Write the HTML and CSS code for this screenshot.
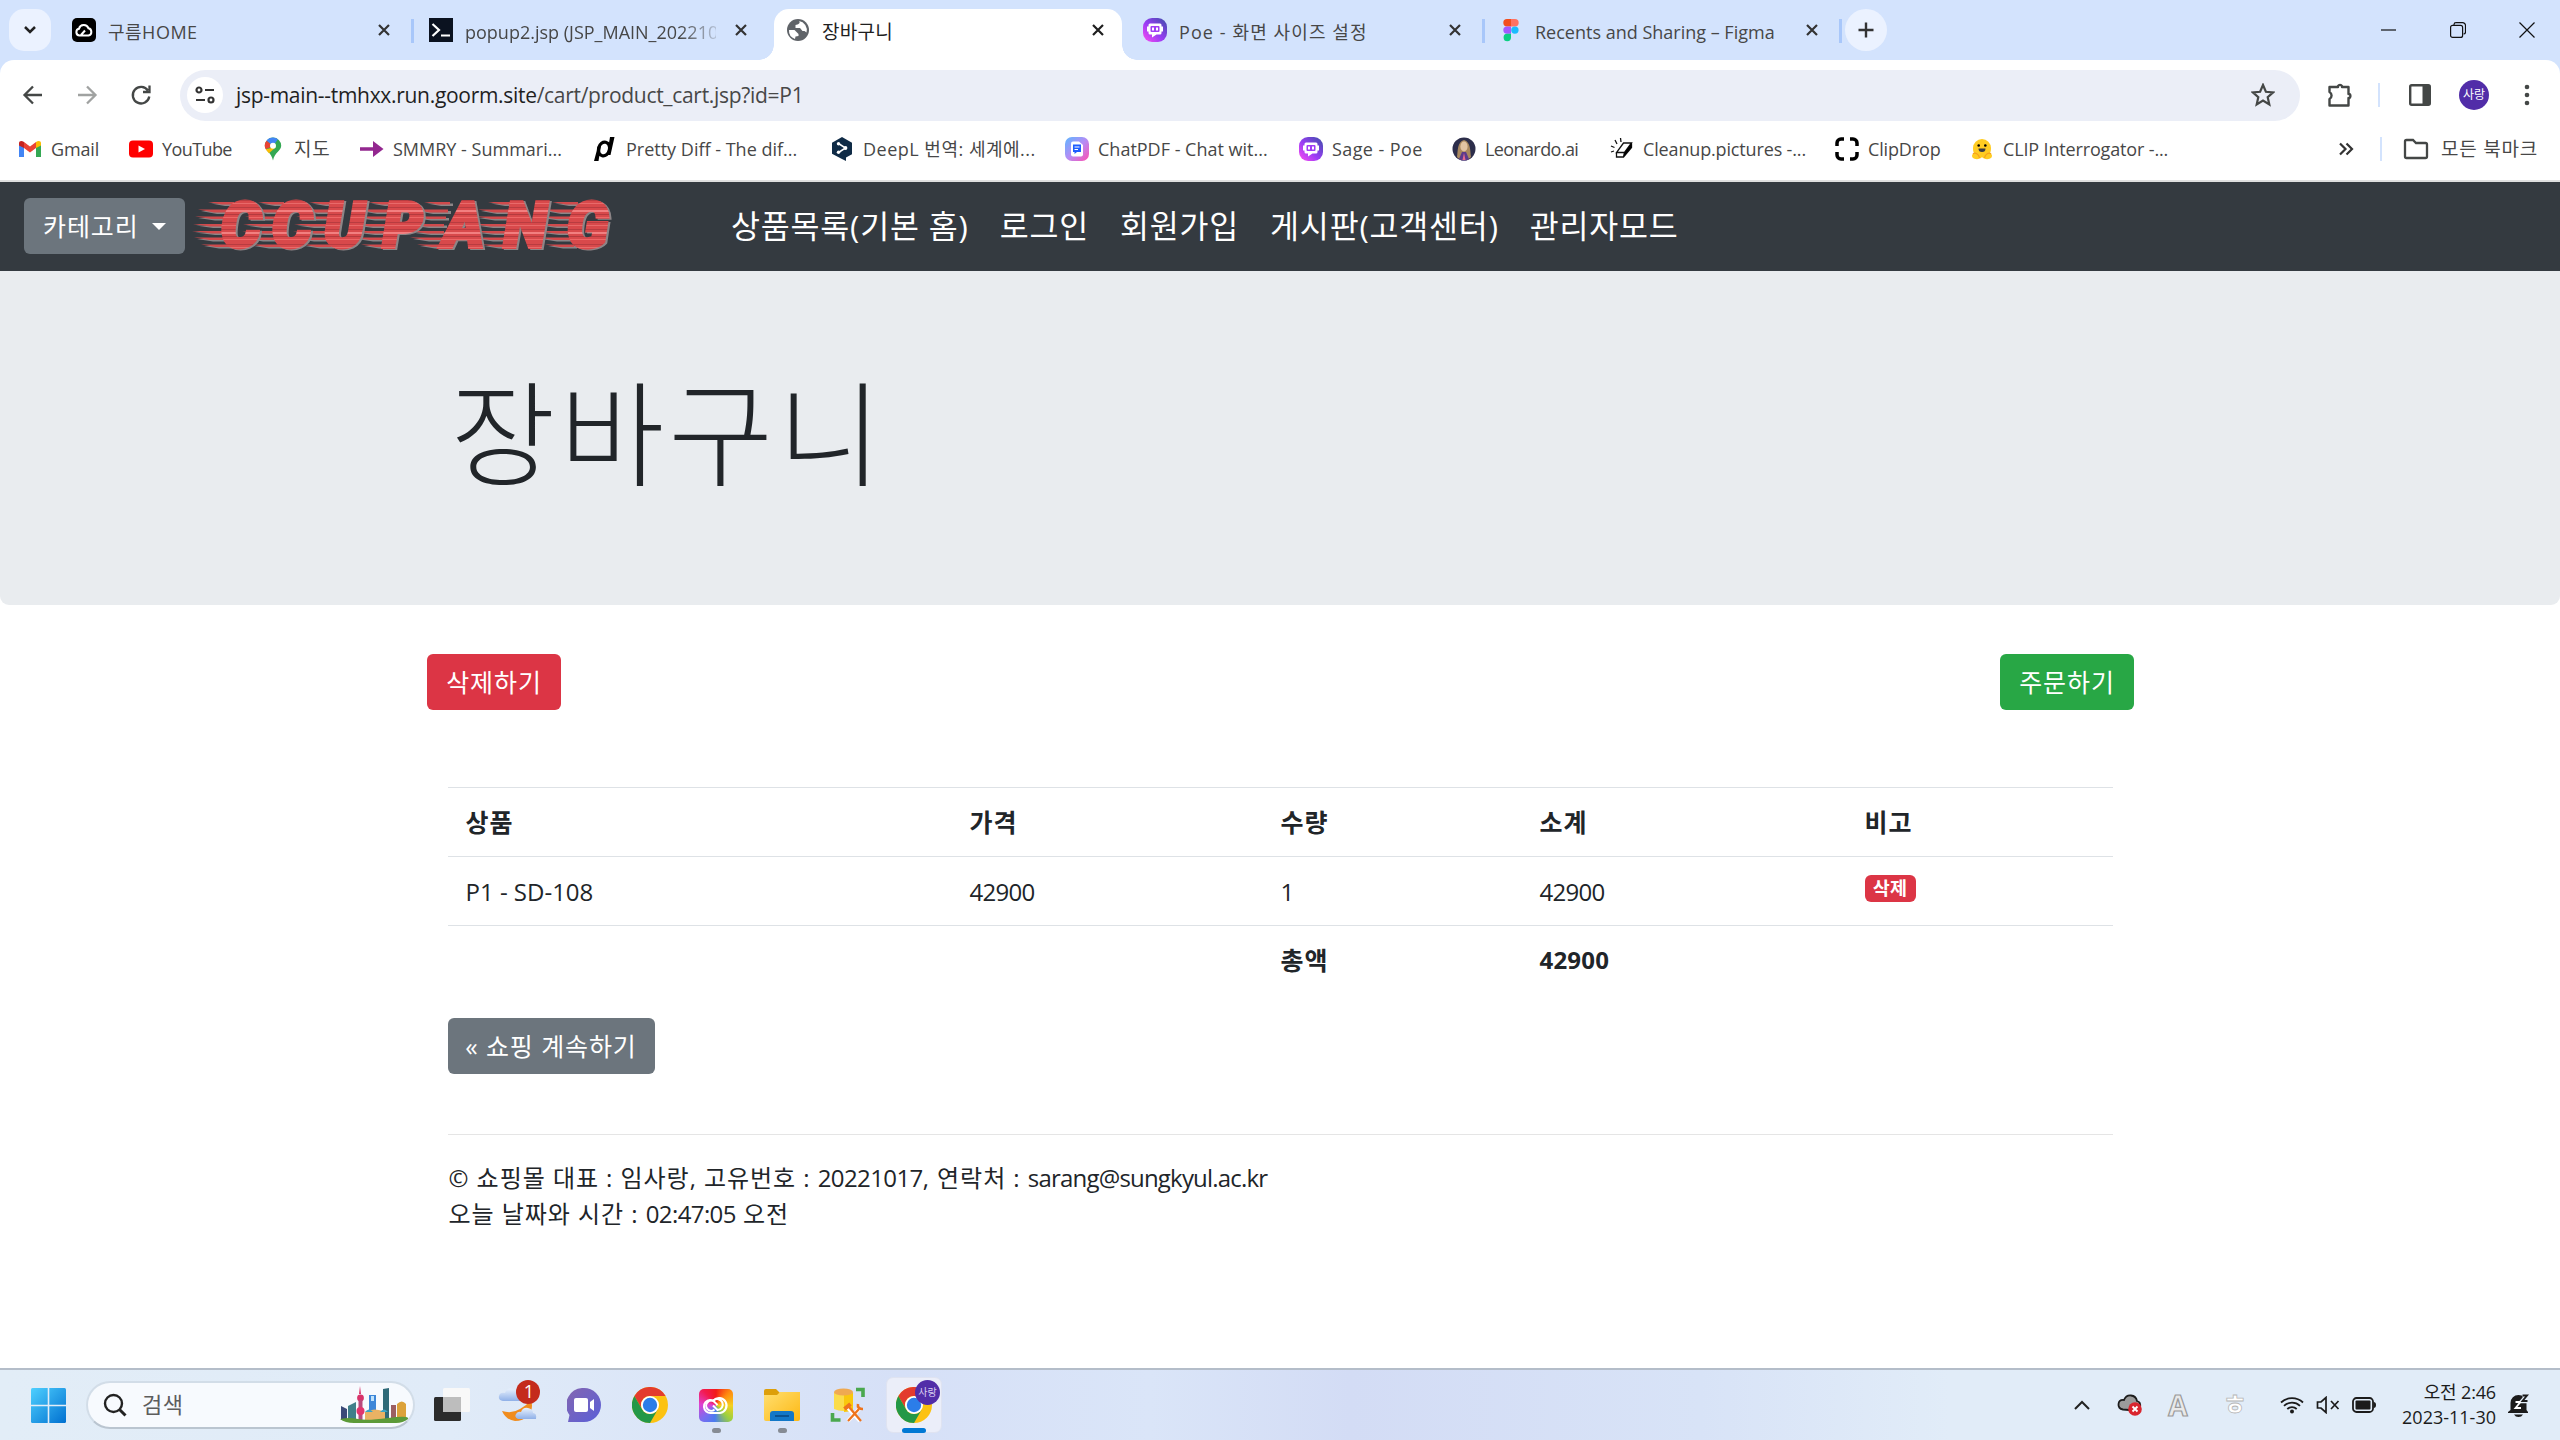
FILE: index.html
```html
<!DOCTYPE html>
<html lang="ko">
<head>
<meta charset="utf-8">
<title>장바구니</title>
<link rel="stylesheet" href="styles.css">
</head>
<body>
<svg class="defs" width="0" height="0" aria-hidden="true">
  <defs>
    <linearGradient id="poe" x1="0" y1="1" x2="1" y2="0"><stop offset="0" stop-color="#ff4df0"/><stop offset=".45" stop-color="#9a3df5"/><stop offset="1" stop-color="#3d4fa8"/></linearGradient>
    <linearGradient id="pdf" x1="0" y1="0" x2="1" y2="1"><stop offset="0" stop-color="#5db6ff"/><stop offset=".5" stop-color="#b58cf5"/><stop offset="1" stop-color="#ff4fb0"/></linearGradient>
    <linearGradient id="win" x1="0" y1="0" x2="1" y2="1"><stop offset="0" stop-color="#4fd0ff"/><stop offset="1" stop-color="#0070d0"/></linearGradient>
    <linearGradient id="chat" x1="0" y1="0" x2="1" y2="1"><stop offset="0" stop-color="#8466b0"/><stop offset="1" stop-color="#5a5fd8"/></linearGradient>
    <linearGradient id="fold" x1="0" y1="0" x2="1" y2="1"><stop offset="0" stop-color="#ffdf70"/><stop offset="1" stop-color="#fdb813"/></linearGradient>
    <linearGradient id="cloud" x1="0" y1="0" x2="0" y2="1"><stop offset="0" stop-color="#e8f1fd"/><stop offset="1" stop-color="#8fb0e8"/></linearGradient>
    <pattern id="scan" width="60" height="22" patternUnits="userSpaceOnUse">
      <rect width="60" height="22" fill="#d8494b"/>
      <rect y="2" width="60" height="1" fill="#b83c40"/><rect y="5" width="60" height="1" fill="#e86a6a"/>
      <rect y="9" width="60" height="1" fill="#b83c40"/><rect y="12" width="60" height="2" fill="#f27f80"/>
      <rect y="16" width="60" height="1" fill="#b53a3e"/><rect y="19" width="60" height="1" fill="#e66"/>
    </pattern>
    <path id="streaks" d="M16 4H42V6.500H30ZM6 11.500H40V14.500H22ZM3 18.500H38V21H20ZM1 26H36V28.500H18ZM0 33H36V35.500H20ZM2 39.500H38V42H18ZM9 46.500H38V49H24Z"/>
    <symbol id="i-x" viewBox="0 0 14 14"><path d="M2 2l10 10M12 2L2 12" fill="none" stroke="currentColor" stroke-width="2.200"/></symbol>
    <symbol id="i-poe" viewBox="0 0 24 24"><rect width="24" height="24" rx="9" fill="url(#poe)"/><path d="M7 5.500h10a1.500 1.500 0 0 1 1.500 1.500v1.500H20v5h-1.500V15a1.500 1.500 0 0 1-1.500 1.500h-3.500L9 19.500v-3H7A1.500 1.500 0 0 1 5.500 15v-1.500H4v-5h1.500V7A1.500 1.500 0 0 1 7 5.500z" fill="#fff"/><rect x="7.500" y="8" width="9" height="6" rx="1" fill="#a03df5"/><path d="M10 9.500v3M14 9.500v3" stroke="#fff" stroke-width="2"/></symbol>
    <symbol id="i-chrome" viewBox="0 0 36 36"><circle cx="18" cy="18" r="18" fill="#fcc211"/><path d="M2.400 9A18 18 0 0 1 33.600 9H18a9 9 0 0 0-7.800 13.500z" fill="#e33b2e"/><path d="M2.400 9A18 18 0 0 0 18 36l7.800-13.500A9 9 0 0 1 10.200 22.500z" fill="#239847"/><circle cx="18" cy="18" r="9" fill="#fff"/><circle cx="18" cy="18" r="7.200" fill="#2b7de9"/></symbol>
  </defs>
</svg>

<header class="browser">
  <div class="tabstrip">
    <button class="tab-search"><svg width="14" height="10" viewBox="0 0 14 10"><path d="M2 2l5 5 5-5" fill="none" stroke="#222" stroke-width="2.500"/></svg></button>
    <div class="tab tab-goorm">
      <svg class="fav" viewBox="0 0 24 24"><rect width="24" height="24" rx="5"/><path d="M7.500 17.500a3.400 3.400 0 0 1-.5-6.700 5 5 0 0 1 9.500-.5A3.700 3.700 0 0 1 16.500 17.500zM9 17l4-4.500" fill="none" stroke="#fff" stroke-width="2"/></svg>
      <span class="tab-title ls-half">구름HOME</span><svg class="x"><use href="#i-x"/></svg>
    </div>
    <div class="tab tab-popup">
      <svg class="fav" viewBox="0 0 24 24"><rect width="24" height="24" fill="#0b1220"/><path d="M3.500 6l6.500 6-6.500 6M12 17.500h9" fill="none" stroke="#fff" stroke-width="2.200"/></svg>
      <span class="tab-title fade">popup2.jsp (JSP_MAIN_202210</span><svg class="x"><use href="#i-x"/></svg>
    </div>
    <div class="tab active">
      <svg class="fav" viewBox="0 0 24 24"><circle cx="12" cy="12" r="11" fill="#5f6368"/><path d="M3 12h5.500l4 4v2l-3 .5-.5 2.500A9 9 0 0 1 3 12zM13 3c1.500 1.500 0 3-1.500 3.500l-2 .5v3h4.500l2.500 3h2l2 1.500A9.300 9.300 0 0 0 13 3z" fill="#fff"/></svg>
      <span class="tab-title ko-title">장바구니</span><svg class="x"><use href="#i-x"/></svg>
    </div>
    <div class="tab tab-poe">
      <svg class="fav"><use href="#i-poe"/></svg>
      <span class="tab-title ls-wide">Poe - 화면 사이즈 설정</span><svg class="x"><use href="#i-x"/></svg>
    </div>
    <div class="tab tab-figma">
      <svg class="fav" viewBox="0 0 24 24"><path d="M12 1H8a3.700 3.700 0 0 0 0 7.400h4z" fill="#f24e1e"/><path d="M12 1h4a3.700 3.700 0 0 1 0 7.400h-4z" fill="#ff7262"/><path d="M12 8.400H8a3.700 3.700 0 0 0 0 7.400h4z" fill="#a259ff"/><circle cx="15.900" cy="12.100" r="3.700" fill="#1abcfe"/><path d="M12 15.800H8a3.700 3.700 0 1 0 4 3.700z" fill="#0acf83"/></svg>
      <span class="tab-title">Recents and Sharing – Figma</span><svg class="x"><use href="#i-x"/></svg>
    </div>
    <button class="new-tab"><svg width="16" height="16" viewBox="0 0 16 16"><path d="M8 .5v15M.5 8h15" stroke="#333" stroke-width="2.400"/></svg></button>
    <div class="window-controls">
      <svg width="16" height="16" viewBox="0 0 16 16"><path d="M1 8h15" stroke="#111" stroke-width="1.200"/></svg>
      <svg width="16" height="16" viewBox="0 0 16 16"><path d="M4 3V2.500A2 2 0 0 1 6 .6h6.500a3 3 0 0 1 3 3V10a2 2 0 0 1-2 2" fill="none" stroke="#111" stroke-width="1.200"/><rect x=".6" y="3.400" width="12" height="12" rx="2" fill="none" stroke="#111" stroke-width="1.200"/></svg>
      <svg width="16" height="16" viewBox="0 0 16 16"><path d="M.5.5l15 15M15.500.5l-15 15" stroke="#111" stroke-width="1.200"/></svg>
    </div>
  </div>

  <div class="toolbar">
    <svg class="nav-icon" viewBox="0 0 24 24"><path d="M21 12H4M12 3.500L3.500 12l8.500 8.500" fill="none" stroke="#444746" stroke-width="2.300"/></svg>
    <svg class="nav-icon dim" viewBox="0 0 24 24"><path d="M3 12h17M12 3.500l8.500 8.500-8.500 8.500" fill="none" stroke="#444746" stroke-width="2.300"/></svg>
    <svg class="nav-icon" viewBox="0 0 24 24"><path d="M19 7.500A8.300 8.300 0 1 0 20.300 13.500M20.500 2.500v6.500H14" fill="none" stroke="#444746" stroke-width="2.300"/></svg>
    <div class="omnibox">
      <span class="site-info"><svg width="20" height="18" viewBox="0 0 20 18"><g fill="none" stroke="#333" stroke-width="2.200"><circle cx="4" cy="4" r="2.500"/><path d="M10 4h9M1 14h9"/><circle cx="16" cy="14" r="2.500"/></g></svg></span>
      <span class="url"><b>jsp-main--tmhxx.run.goorm.site</b>/cart/product_cart.jsp?id=P1</span>
      <svg class="star" viewBox="0 0 24 24"><path d="M12 2l2.900 6.800 7.300.6-5.500 4.800 1.600 7.200-6.300-3.800-6.300 3.800 1.600-7.200L1.800 9.400l7.300-.6z" fill="none" stroke="#444746" stroke-width="2.200"/></svg>
    </div>
    <svg class="ext" viewBox="0 0 27 27"><path d="M2.500 5h8.500V4a2.300 2.300 0 0 1 4 0v1h6.500v7h1a2.600 2.600 0 0 1 0 4h-1v7.500h-19v-6.500a4 4 0 0 0 0-7z" fill="none" stroke="#444746" stroke-width="2.400" stroke-linejoin="round"/></svg>
    <i class="sep"></i>
    <svg class="side" viewBox="0 0 22 22"><rect x="1.200" y="1.200" width="19.600" height="19.600" rx="1.500" fill="none" stroke="#444746" stroke-width="2.400"/><path d="M13.500 1H21v20h-7.500z" fill="#444746"/></svg>
    <span class="avatar">사랑</span>
    <svg class="dots" viewBox="0 0 6 22"><g fill="#444746"><circle cx="3" cy="3" r="2.300"/><circle cx="3" cy="11" r="2.300"/><circle cx="3" cy="19" r="2.300"/></g></svg>
  </div>

  <nav class="bookmarks">
    <a class="bm"><svg viewBox="0 0 24 24"><path d="M1 20V6l5 4v10z" fill="#4285f4"/><path d="M23 20V6l-5 4v10z" fill="#34a853"/><path d="M6 11V5l6 4.500L18 5v6l-6 4.500z" fill="#ea4335"/><path d="M1 8.500V6c0-2 2.500-3 5-1v6z" fill="#c5221f"/><path d="M23 8.500V6c0-2-2.500-3-5-1v6z" fill="#fbbc04"/></svg><span class="ls-bit">Gmail</span></a>
    <a class="bm"><svg viewBox="0 0 24 24"><rect y="3.500" width="24" height="17" rx="4" fill="red"/><path d="M9.500 8.500v7l6.500-3.500z" fill="#fff"/></svg><span class="ls-tight">YouTube</span></a>
    <a class="bm"><svg viewBox="0 0 24 24"><path d="M12 .5A8.200 8.200 0 0 0 3.800 8.700C3.800 14 10.500 15 12 23.500 13.500 15 20.200 14 20.200 8.700A8.200 8.200 0 0 0 12 .5z" fill="#34a853"/><path d="M12 .5a8.200 8.200 0 0 0-6.500 3.200L12 9l5-6.800A8.200 8.200 0 0 0 12 .5z" fill="#4285f4"/><path d="M5.500 3.700a8.200 8.200 0 0 0-.8 8.600L12 9z" fill="#ea4335"/><path d="M4.700 12.300c.8 1.400 2 2.700 3.300 4L15 10z" fill="#fbbc04"/><circle cx="12" cy="8.700" r="3" fill="#fff"/></svg><span class="ko-label">지도</span></a>
    <a class="bm"><svg viewBox="0 0 24 24"><path d="M0 10.200h13V4l10.500 8L13 20v-6.200H0z" fill="#93278f"/></svg><span>SMMRY - Summari...</span></a>
    <a class="bm"><svg viewBox="0 0 24 24"><ellipse cx="11" cy="12" rx="5.500" ry="7" transform="rotate(15 11 12)" fill="none" stroke="#000" stroke-width="3.200"/><path d="M17 0h4.500l-4 18H14zM5 9l3 0L5.500 24H1z"/></svg><span>Pretty Diff - The dif...</span></a>
    <a class="bm"><svg viewBox="0 0 24 24"><path d="M12 0l10 5.700v11.500L16 20.500V24l-5-2.500-9-4.800V5.700z" fill="#0f2b46"/><path d="M8.500 6.500l7 4.500-7 4.500" fill="none" stroke="#fff" stroke-width="1.500"/><circle cx="8.500" cy="6.700" r="1.700" fill="#fff"/><circle cx="15.500" cy="11" r="1.900" fill="#fff"/><circle cx="8.500" cy="15.300" r="1.700" fill="#fff"/></svg><span class="ls-half">DeepL 번역: 세계에...</span></a>
    <a class="bm"><svg viewBox="0 0 24 24"><rect width="24" height="24" rx="7" fill="url(#pdf)"/><path d="M8 4.500h6l4 3.500v9.500a2 2 0 0 1-2 2H8a2 2 0 0 1-2-2v-11a2 2 0 0 1 2-2z" fill="#fff"/><path d="M8 7.500h8V15h-4l-2.500 2V15H8z" fill="#1f5dff"/><path d="M9.500 10h5M9.500 12.500h3.500" stroke="#fff"/></svg><span>ChatPDF - Chat wit...</span></a>
    <a class="bm"><svg><use href="#i-poe"/></svg><span class="ls-some">Sage - Poe</span></a>
    <a class="bm"><svg viewBox="0 0 24 24"><circle cx="12" cy="12" r="11.500" fill="#2c2d4a"/><path d="M5 20c1-6 0-15 7-17 7 2 6 11 7 17-3 4-11 4-14 0z" fill="#a9885f"/><ellipse cx="12" cy="9.500" rx="3.600" ry="5" fill="#e2c3a2"/><path d="M7 22l3-7h4l3 7c-3 2-7 2-10 0z" fill="#5b3a8c"/><path d="M10.500 23l1.500-7 1.500 7z" fill="#e56b8c"/></svg><span class="ls-tight">Leonardo.ai</span></a>
    <a class="bm"><svg viewBox="0 0 24 24"><g fill="none" stroke="#111" stroke-width="1.300"><path d="M13.500 6h8l-7 9.500H6.500zM6.500 15.500V20h7l8-9.500V6M14.500 15.500L13.500 20M1 9l3.500 1.500M1 15l3-1M5 3l2 4M10.500 1l.5 4"/></g><path d="M14.500 15.500L21.500 6v4.500l-8 9.500z"/></svg><span class="ls-bit">Cleanup.pictures -...</span></a>
    <a class="bm"><svg viewBox="0 0 24 24"><path d="M2 9V6a4 4 0 0 1 4-4h3M15 2h3a4 4 0 0 1 4 4v3M22 15v3a4 4 0 0 1-4 4h-3M9 22H6a4 4 0 0 1-4-4v-3" fill="none" stroke="#000" stroke-width="3.500"/></svg><span class="ls-bit">ClipDrop</span></a>
    <a class="bm"><svg viewBox="0 0 24 24"><path d="M3 11a9 9 0 0 1 18 0c0 2-.3 4-1 5 2 1 2.500 3 1.500 4.500C19 23 14 22.500 12 20c-2 2.500-7 3-9.500.5C1.500 19 2 17 4 16c-.7-1-1-3-1-5z" fill="#fc2"/><path d="M3 17c2-2 6 0 6.500 4M21 17c-2-2-6 0-6.500 4" fill="none" stroke="#f6a21b" stroke-width="1.300"/><circle cx="8.700" cy="8.500" r="1.300"/><circle cx="15.300" cy="8.500" r="1.300"/><path d="M8.500 11.500h7a3.500 3.500 0 0 1-7 0z" fill="#3a3b45"/></svg><span class="ls-bit">CLIP Interrogator -...</span></a>
    <svg class="more" viewBox="0 0 16 14"><path d="M2 1.500L7.500 7 2 12.500M8.500 1.500L14 7l-5.500 5.500" fill="none" stroke="#333" stroke-width="2.200"/></svg>
    <i class="sep"></i>
    <a class="bm all"><svg viewBox="0 0 26 22"><path d="M2 3.500v15A1.500 1.500 0 0 0 3.500 20h19a1.500 1.500 0 0 0 1.500-1.500v-12A1.500 1.500 0 0 0 22.500 5H13l-3-3H3.500A1.500 1.500 0 0 0 2 3.500z" fill="none" stroke="#444746" stroke-width="2.300"/></svg><span class="ko-label">모든 북마크</span></a>
  </nav>
</header>

<nav class="navbar">
  <button class="btn secondary dropdown">카테고리<i class="caret"></i></button>
  <svg class="logo" width="424" height="56" viewBox="0 0 424 56" aria-label="CCUPANG">
    <g fill="#8d8587" transform="translate(3 1.500)"><use href="#streaks"/><use href="#streaks" x="50"/><use href="#streaks" x="101"/><use href="#streaks" x="160"/><use href="#streaks" x="216"/><use href="#streaks" x="280"/><use href="#streaks" x="344"/></g>
    <g fill="#cf4a4c"><use href="#streaks"/><use href="#streaks" x="50"/><use href="#streaks" x="101"/><use href="#streaks" x="160"/><use href="#streaks" x="216"/><use href="#streaks" x="280"/><use href="#streaks" x="344"/></g>
    <text y="49" x="29 80 132 191 251 312 375">CCUPANG</text>
  </svg>
  <div class="menu">
    <a>상품목록(기본 홈)</a><a>로그인</a><a>회원가입</a><a>게시판(고객센터)</a><a>관리자모드</a>
  </div>
</nav>

<main>
  <section class="jumbotron"><div class="container"><h1>장바구니</h1></div></section>
  <div class="container actions">
    <button class="btn danger">삭제하기</button>
    <button class="btn success">주문하기</button>
  </div>
  <div class="container cart">
    <table>
      <colgroup><col class="c1"><col class="c2"><col class="c3"><col class="c4"><col class="c5"></colgroup>
      <tr><th>상품</th><th>가격</th><th>수량</th><th>소계</th><th>비고</th></tr>
      <tr><td>P1 - SD-108</td><td class="num">42900</td><td>1</td><td class="num">42900</td><td><span class="badge">삭제</span></td></tr>
      <tr><th></th><th></th><th>총액</th><th class="sum">42900</th><th></th></tr>
    </table>
    <button class="btn secondary back">« 쇼핑 계속하기</button>
    <hr>
    <footer>
      <p>© 쇼핑몰 대표 : 임사랑, 고유번호 : <span class="latin">20221017</span>, 연락처 : <span class="mail">sarang@sungkyul.ac.kr</span></p>
      <p>오늘 날짜와 시간 : <span class="latin">02:47:05</span> 오전</p>
    </footer>
  </div>
</main>

<div class="taskbar">
  <svg class="start" viewBox="0 0 35 35"><rect width="35" height="35" rx="1.500" fill="url(#win)"/><path d="M17.500 0v35M0 17.500h35" stroke="#e2edf8" stroke-width="1.600"/></svg>
  <div class="search">
    <svg width="24" height="24" viewBox="0 0 24 24"><circle cx="10.500" cy="10.500" r="8.500" fill="none" stroke="#222" stroke-width="2.400"/><path d="M16.500 16.500l6 6" stroke="#222" stroke-width="3"/></svg>
    <span>검색</span>
    <svg class="city" width="68" height="38" viewBox="0 0 68 38"><path d="M1 20l6 3v11H1z" fill="#3b4a78"/><path d="M8 34V20l8-4v18z" fill="#3f7f8a"/><path d="M20 0l1 8h-2z" fill="#d8336a"/><circle cx="20.500" cy="12" r="3.400" fill="#d8336a"/><path d="M18.500 14h4v20h-4z" fill="#b9497d"/><circle cx="20.500" cy="25" r="4" fill="#e0356e"/><path d="M29 9h7v25h-7z" fill="#3d86d8"/><path d="M31 10h3v5h-3z" fill="#bfe2fb"/><path d="M43 3l6-1v32h-6z" fill="#2f6a78"/><path d="M51 19h5v15h-5z" fill="#9c5f63"/><path d="M57 18q5-5 9 0v15h-9z" fill="#dca23a"/><path d="M25 26q10-5 20 0v8H25z" fill="#e9b264"/><path d="M25 26q4-5 8 0zM40 26q4-5 8 0z" fill="#3aa3c4"/><path d="M0 33q10-2 18 0t30-1 20 1q-5 4-12 4H14Q5 37 0 33z" fill="#5c9a38"/></svg>
  </div>
  <div class="apps">
    <span class="app"><svg width="36" height="34" viewBox="0 0 36 34"><rect x="0" y="9" width="27" height="24" rx="1.500" fill="#2b2b2b"/><rect x="9" y="0" width="27" height="24" rx="1.500" fill="#f8f8f8"/><path d="M9 9h18v15H9z" fill="#bdbdbd"/></svg></span>
    <span class="app weather"><svg width="44" height="42" viewBox="0 0 44 42"><path d="M5 21q-5-1-4-5t6-3q2-6 8-4t6 6q5 0 4 6z" fill="url(#cloud)"/><path d="M4 31q10 3 18-2 6-3 11-9 3 9-3 16-5 5-13 5-9-1-13-10z" fill="#f08c1e"/><path d="M20 39q-4-2-2-5t5-2q2-5 7-4t5 5q4 0 3 6z" fill="url(#cloud)"/><circle cx="30" cy="12" r="12" fill="#c42b1c"/><text x="31" y="18" class="count">1</text></svg></span>
    <span class="app"><svg width="34" height="34" viewBox="0 0 34 34"><path d="M17 0a17 17 0 0 1 0 34H1l1.500-7A17 17 0 0 1 17 0z" fill="url(#chat)"/><rect x="7" y="10" width="14" height="14" rx="2" fill="#fff"/><path d="M23 14l4-3v12l-4-3z" fill="#fff"/></svg></span>
    <span class="app"><svg width="36" height="36"><use href="#i-chrome"/></svg></span>
    <span class="app open"><svg class="cc" width="34" height="33" viewBox="0 0 34 33"><g fill="none" stroke="#fff" stroke-width="2.100"><path d="M15.500 20.500a5 5 0 1 1 0-7.500l3 3M14 16.500l4.500 4.500a5.500 5.500 0 1 0-4-9.500"/><path d="M14.500 11.500a7.500 7.500 0 1 1 6.500 12.500H12a6.500 6.500 0 0 1-1-13q2 0 3.500.5z"/></g></svg></span>
    <span class="app open"><svg width="36" height="34" viewBox="0 0 36 34"><path d="M0 3a2 2 0 0 1 2-2h10l4 4v6H0z" fill="#dd9f0a"/><path d="M0 7h13l3-3h20v27a2 2 0 0 1-2 2H2a2 2 0 0 1-2-2z" fill="url(#fold)"/><path d="M6 33v-7a3 3 0 0 1 3-3h18a3 3 0 0 1 3 3v7z" fill="#1277c8"/><path d="M11 28h14" stroke="#0a4f8c" stroke-width="1.800"/></svg></span>
    <span class="app"><svg width="36" height="36" viewBox="0 0 36 36"><path d="M4 5v17q9 4 19 0V5z" fill="#fbdc4a"/><path d="M14 8v17q5 0 9-2V6z" fill="#f9c80e"/><ellipse cx="13.500" cy="5" rx="9.500" ry="3.600" fill="#efa951"/><path d="M26 2.500h7v7.500M2.500 26v7h8" fill="none" stroke="#4aa84e" stroke-width="3.600"/><g fill="none" stroke="#fff" stroke-width="4"><path d="M18 34l12-13M18 21l12 13"/></g><g fill="none" stroke="#ee741d"><path d="M18 34l11-12M19 20l12 14" stroke-width="2.300"/><path d="M14.500 22l6-5" stroke-width="4"/><path d="M28 17q-1 5 5 5" stroke-width="2.600"/></g></svg></span>
    <span class="app current"><svg width="36" height="36"><use href="#i-chrome"/></svg><b class="profile">사랑</b></span>
  </div>
  <div class="tray">
    <svg class="t-up" viewBox="0 0 16 10"><path d="M1 9l7-7 7 7" fill="none" stroke="#222" stroke-width="2"/></svg>
    <svg class="t-cloud" viewBox="0 0 26 22"><path d="M6 15.500q-5-1-4.500-5.500T7 6q2-5 7-4.500T20 7q4 1 3 6L12 16z" fill="#9b9b9b" stroke="#1c1c1c" stroke-width="1.800"/><circle cx="18" cy="15" r="6.800" fill="#d9252e"/><path d="M15.500 12.500l5 5m0-5l-5 5" stroke="#fff" stroke-width="1.800"/></svg>
    <span class="ime">A</span>
    <span class="ime ko">ㅎ</span>
    <svg class="t-wifi" viewBox="0 0 24 18"><g fill="none" stroke="#1b1b1b" stroke-width="1.800"><path d="M1 6.500a16 16 0 0 1 22 0M4 9.800a11.500 11.500 0 0 1 16 0M7.300 13a7 7 0 0 1 9.400 0"/></g><circle cx="12" cy="15.500" r="2" fill="#1b1b1b"/></svg>
    <svg class="t-mute" viewBox="0 0 24 18"><path d="M1.500 6v6H5l5 4.500v-15L5 6zM15 5l7.500 8M22.500 5L15 13" fill="none" stroke="#1b1b1b" stroke-width="1.700"/></svg>
    <svg class="t-bat" viewBox="0 0 24 16"><rect x="1" y="1" width="20" height="14" rx="3.500" fill="none" stroke="#1b1b1b" stroke-width="1.800"/><rect x="3.500" y="3.500" width="15" height="9" rx="1" fill="#1b1b1b"/><path d="M21.500 5q2.500 0 2.500 3t-2.500 3z" fill="#1b1b1b"/></svg>
    <div class="clock"><span class="ls-bit">오전 2:46</span><span>2023-11-30</span></div>
    <svg class="t-bell" viewBox="0 0 22 24"><path d="M2.500 17V10a8 8 0 0 1 16 0v7l1.500 2v1H0v-1zM6 21.500h9q-1.500 2.500-4.500 2.500T6 21.500z" fill="#1b1b1b"/><path d="M14.500 2.500h5l-5 5.500h5.500" fill="none" stroke="#e2edf8" stroke-width="4.500"/><path d="M7.500 9h5l-5 6h5.500" fill="none" stroke="#fff" stroke-width="1.800"/><path d="M14.500 2.500h4.500l-4.500 5.500h5" fill="none" stroke="#1b1b1b" stroke-width="1.900"/></svg>
  </div>
</div>
</body>
</html>
```
FILE: styles.css
```css
* { box-sizing: border-box; }
body {
  margin: 0;
  width: 2560px;
  height: 1440px;
  overflow: hidden;
  display: flex;
  flex-direction: column;
  background: #fff;
  color: #212529;
  font: 24px/36px "Open Sans", "Noto Sans CJK KR", sans-serif;
}
button { font: inherit; border: 0; padding: 0; }
svg { display: block; flex: none; }
.defs { position: absolute; }

/* Letter spacing of mixed Korean and Latin labels */
.ls-tight { letter-spacing: -.6px; }
.ls-bit { letter-spacing: -.15px; }
.ls-some { letter-spacing: .4px; }
.ls-half { letter-spacing: .5px; }
.ls-wide { letter-spacing: 1.1px; }
.ko-title { font-size: 19px; letter-spacing: .3px; }
.ko-label { font-size: 19px; letter-spacing: .8px; }

/* Tab strip */
.browser { background: #d3e3fd; font-size: 18px; line-height: 24px; color: #474747; }
.tabstrip {
  display: grid;
  grid-template-columns: 42px 371px 352px 348px 362px 361px 42px 1fr;
  height: 60px;
  padding: 9px 0 0 9px;
  align-items: start;
}
.tab-search, .new-tab {
  display: flex; align-items: center; justify-content: center;
  width: 42px; height: 42px; border-radius: 15px; background: #ebf2ff;
}
.new-tab { border-radius: 50%; }
.tab { display: flex; align-items: center; height: 42px; gap: 12px; padding-right: 22px; }
.tab .fav { width: 24px; height: 24px; }
.tab .x { width: 14px; height: 14px; color: #333; margin-left: auto; }
.tab-title { white-space: nowrap; padding-top: 3px; }
.tab-goorm { padding: 0 31px 0 21px; }
.tab-popup, .tab-figma { position: relative; }
.tab-popup { padding: 0 26px 0 7px; }
.tab-figma { padding: 0 26px 0 15px; }
.tab-popup::before, .tab-figma::before, .tab-figma::after {
  content: ""; position: absolute; left: -11px; top: 10px; width: 3px; height: 24px; background: #a8c7fa;
}
.tab-figma::before { left: -2px; }
.tab-figma::after { left: auto; right: 3px; }
.fade { width: 251px; overflow: hidden; mask-image: linear-gradient(90deg, #000 215px, transparent 260px); }
.active {
  position: relative; height: 51px; padding: 0 17px 9px 12px;
  background: #fff; border-radius: 15px 15px 0 0; color: #1f1f1f;
}
.active .x { color: #1f1f1f; }
.active::before, .active::after {
  content: ""; position: absolute; bottom: 0; width: 15px; height: 15px;
}
.active::before { left: -15px; background: radial-gradient(circle at 0 0, transparent 14.5px, #fff 15px); }
.active::after { right: -15px; background: radial-gradient(circle at 100% 0, transparent 14.5px, #fff 15px); }
.tab-poe { padding-left: 21px; }
.window-controls { display: flex; justify-content: flex-end; gap: 53.500px; padding: 13px 25px 0 0; }

/* Toolbar */
.toolbar {
  display: flex; align-items: center; height: 70px;
  background: #fff; border-radius: 14px 14px 0 0; padding: 0 30px 0 21px;
}
.nav-icon { width: 24px; height: 24px; margin-right: 30px; }
.nav-icon.dim { opacity: .5; }
.omnibox {
  display: flex; align-items: center; width: 2120px; height: 51px; margin-left: -3px;
  border-radius: 26px; background: #ebeef7; padding: 0 25px 0 7px;
}
.site-info {
  display: flex; align-items: center; justify-content: center;
  width: 36px; height: 36px; border-radius: 50%; background: #fff; margin-right: 13px;
}
.url { font-size: 21px; letter-spacing: -.3px; white-space: nowrap; }
.url b { font-weight: 400; color: #1f1f1f; }
.star { width: 24px; height: 24px; margin-left: auto; }
.ext { width: 27px; height: 27px; margin-left: 27px; }
.sep { width: 2px; height: 24px; background: #d3e3fd; }
.toolbar .sep { margin: 0 29px 0 24px; }
.side { width: 22px; height: 22px; }
.avatar {
  width: 30px; height: 30px; border-radius: 50%; background: #512da8; color: #fff;
  font-size: 12px; line-height: 29px; text-align: center; margin: 0 35px 0 28px;
}
.dots { width: 6px; height: 22px; }

/* Bookmarks */
.bookmarks {
  display: grid; align-items: center;
  grid-template-columns: 111px 132px 99px 233px 237px 235px 234px 153px 158px 225px 135px 368px 42px 23px 1fr;
  height: 52px; padding: 0 0 12px 18px;
  background: #fff; border-bottom: 2px solid #dfdfdf;
}
.bm { display: flex; align-items: center; gap: 9px; white-space: nowrap; }
.bm svg { width: 24px; height: 24px; }
.bm.all { gap: 12px; }
.bm.all svg { width: 26px; height: 22px; }
.more { width: 16px; height: 14px; }

/* Site navbar */
.navbar { display: flex; align-items: center; height: 89px; background: #343a40; padding: 0 24px 1px; }
.btn {
  display: inline-flex; align-items: center; justify-content: center;
  height: 56px; padding: 0; border-radius: 6px; color: #fff;
  font-size: 25px; letter-spacing: .9px; white-space: nowrap;
}
.secondary { background: #6c757d; }
.danger { background: #dc3545; }
.success { background: #28a745; }
.dropdown { width: 161px; padding-left: 19px; justify-content: flex-start; gap: 13px; }
.caret { border: 7px solid transparent; border-top-color: #fff; border-bottom: 0; }
.logo { margin-left: 7px; }
.logo text {
  font: italic 900 62px Roboto, sans-serif;
  fill: url(#scan); stroke: url(#scan); stroke-width: 4px;
  filter: drop-shadow(2px 1.500px 0 #8d8587);
}
.menu { display: flex; margin-left: 115px; gap: 31px; font-size: 31.500px; letter-spacing: .8px; color: #fff; white-space: nowrap; }

/* Cart page */
.container { width: 1710px; margin: 0 auto; padding: 0 22.500px; }
.jumbotron { background: #e9ecef; height: 334px; border-radius: 0 0 9px 9px; padding-top: 97px; }
h1 { margin: 0 0 0 3px; font-size: 114px; line-height: 130px; font-weight: 300; letter-spacing: 4px; white-space: nowrap; }
.actions { display: flex; justify-content: space-between; padding: 0 1px 0 2px; margin-top: 49px; }
.actions .btn { width: 134px; }
.cart { margin-top: 77px; }
table { width: 1665px; table-layout: fixed; border-collapse: collapse; margin-bottom: 23px; }
.c1 { width: 504px; } .c2 { width: 311px; } .c3 { width: 259px; } .c4 { width: 325px; } .c5 { width: 266px; }
th, td { height: 69px; padding: 0 18px; text-align: left; border-top: 1.500px solid #dee2e6; white-space: nowrap; }
td { padding-top: 2px; }
th { font-size: 25px; letter-spacing: 1px; }
.num { letter-spacing: -.7px; }
.sum { font-size: 24px; letter-spacing: .2px; }
.badge {
  display: flex; align-items: center; justify-content: center; width: 51px; height: 27px; margin-top: -8px;
  border-radius: 6px; background: #dc3545; color: #fff; font-size: 18.500px; font-weight: 700; letter-spacing: .3px;
}
.back { width: 207px; }
hr { border: 0; border-top: 1.500px solid #e5e5e5; margin: 60px 0 25px; }
footer p { margin: 0 0 0 1px; letter-spacing: .95px; white-space: nowrap; }
.mail { letter-spacing: -.8px; }
.latin { letter-spacing: -.6px; }

/* Taskbar */
.taskbar {
  display: flex; align-items: center; height: 72px; margin-top: auto; padding-left: 31px;
  border-top: 2px solid #b4bdc9;
  background: linear-gradient(90deg, #e2edf7 0, #e0ebf8 450px, #d6e0f7 900px, #dae5f8 1150px, #d3dcf5 1350px, #d8e3f7 1700px, #e1ecf8 1950px, #e1ecf8 100%);
}
.start { width: 35px; height: 35px; }
.search {
  display: flex; align-items: center; width: 329px; height: 48px; margin: 0 4px 0 20px; padding: 0 5px 0 15px;
  border: 2px solid #d2dde8; border-bottom-color: #bac5d0; border-radius: 24px; background: #f7fafe;
  font-size: 22px; letter-spacing: .4px; color: #5d5d5d;
}
.search span { margin: -3px 0 0 15px; }
.city { margin-left: auto; }
.apps { display: flex; }
.app { display: flex; position: relative; width: 66px; height: 56px; align-items: center; justify-content: center; }
.weather { padding: 0 0 8px 4px; }
.cc {
  border-radius: 5px;
  background: conic-gradient(#f21a1a, #ff8a10 45deg, #f5d020 90deg, #9bd040 135deg, #4a7cf0 185deg, #7a6cf0 225deg, #e040d0 275deg, #f21a50 320deg, #f21a1a);
}
.open::after { content: ""; position: absolute; bottom: 0; left: 29px; width: 9px; height: 5px; border-radius: 3px; background: #868b94; }
.current { width: 56px; margin-left: 5px; border-radius: 7px; background: #ebeef9; border: 1px solid #dfe3f1; }
.current::after { content: ""; position: absolute; bottom: -1px; left: 15px; width: 24px; height: 5px; border-radius: 3px; background: #0078d4; }
.profile {
  position: absolute; right: 1px; top: 2px; width: 25px; height: 25px; border-radius: 50%;
  background: #512da8; color: #d9cff0; font-size: 10px; line-height: 24px; text-align: center; font-weight: 400;
}
.count { font: 18px "Open Sans", sans-serif; fill: #fff; text-anchor: middle; }
.tray { display: flex; align-items: center; margin-left: auto; padding-right: 30px; color: #1b1b1b; }
.t-up { width: 16px; height: 10px; margin-right: 27px; }
.t-cloud { width: 26px; height: 22px; margin-right: 22px; }
.ime { width: 26px; font: 700 28px/36px "Open Sans", "Noto Sans CJK KR", sans-serif; color: #e9e9e9; text-align: center; -webkit-text-stroke: 1.200px #9a9a9a; }
.ime.ko { margin: 0 32px 0 31px; color: #fff; font-size: 27px; -webkit-text-stroke: .8px #b5b5b5; }
.t-wifi { width: 24px; height: 18px; margin-right: 12px; }
.t-mute { width: 24px; height: 18px; margin-right: 12px; }
.t-bat { width: 24px; height: 16px; }
.clock { display: flex; flex-direction: column; align-items: flex-end; width: 120px; margin-top: -1px; font-size: 18px; line-height: 25px; white-space: nowrap; }
.t-bell { width: 22px; height: 24px; margin-left: 12px; }
```
